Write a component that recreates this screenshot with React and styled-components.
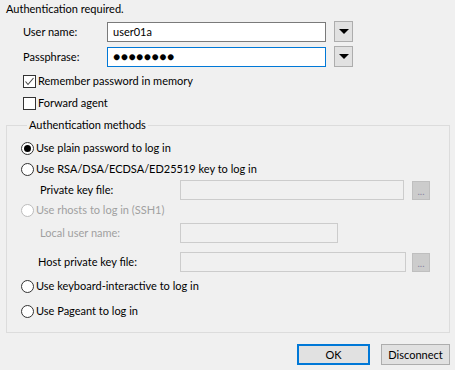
import React from "react";
import styled, { createGlobalStyle } from "styled-components";

const GlobalStyle = createGlobalStyle`
  html, body {
    margin: 0;
    padding: 0;
    background: #f0f0f0;
  }
`;

const Dialog = styled.div`
  width: 455px;
  height: 370px;
  box-sizing: border-box;
  padding: 1px 5px 0 6px;
  background: #f0f0f0;
  color: #000;
  font-family: Lato, Roboto, "Liberation Sans", Arial, sans-serif;
  font-size: 11px;
  line-height: 16px;
  display: flex;
  flex-direction: column;
`;

const Title = styled.div`
  height: 16px;
`;

const CredGrid = styled.div`
  display: grid;
  grid-template-columns: 76px 219px 19px;
  grid-auto-rows: 21px;
  column-gap: 8px;
  row-gap: 4px;
  align-items: center;
  margin: 4px 0 0 17px;
`;

const Label = styled.span`
  color: ${p => (p.$disabled ? "#a0a0a0" : "#000")};
  white-space: nowrap;
`;

const TextBox = styled.div`
  height: 20px;
  box-sizing: border-box;
  border: 1px solid ${p => (p.$focused ? "#0078d7" : p.$disabled ? "#cccccc" : "#7a7a7a")};
  background: ${p => (p.$disabled ? "#f0f0f0" : "#fff")};
  width: ${p => p.$width || 219}px;
  padding: 0 5px;
  display: flex;
  align-items: center;
  overflow: hidden;
  font-size: ${p => (p.$dots ? "12px" : "inherit")};
  letter-spacing: ${p => (p.$dots ? "0.5px" : "normal")};
`;

const DropButton = styled.div`
  width: 19px;
  height: 21px;
  box-sizing: border-box;
  border: 1px solid #adadad;
  background: #e1e1e1;
  display: flex;
  align-items: center;
  justify-content: center;
`;

const CheckRow = styled.label`
  display: flex;
  align-items: center;
  height: 20px;
  margin-left: 17px;
  margin-top: ${p => p.$top || 0}px;
`;

const Box = styled.span`
  width: 13px;
  height: 13px;
  box-sizing: border-box;
  border: 1px solid #333;
  background: #fff;
  margin-right: 2px;
  display: flex;
  align-items: center;
  justify-content: center;
`;

const Group = styled.fieldset`
  margin: 5px 0 0 0;
  padding: 0 0 10px 14px;
  border: 1px solid #dcdcdc;
  height: 215px;
  box-sizing: border-box;
  min-width: 0;
  display: flex;
  flex-direction: column;
`;

const Legend = styled.legend`
  padding: 0 2px;
  margin-left: 6px;
  line-height: 14px;
`;

const Row = styled.div`
  display: flex;
  align-items: center;
  height: 20px;
  margin-top: ${p => p.$top || 0}px;
`;

const SubRow = styled(Row)`
  padding-left: ${p => p.$indent || 19}px;
`;

const SubLabel = styled(Label)`
  width: ${p => 159 - (p.$indent || 19)}px;
`;

const Radio = styled.span`
  width: 13px;
  height: 13px;
  box-sizing: border-box;
  border-radius: 50%;
  border: 1px solid ${p => (p.$disabled ? "#bcbcbc" : "#333")};
  background: #fff;
  margin-right: 2px;
  display: flex;
  align-items: center;
  justify-content: center;

  &::after {
    content: "";
    display: ${p => (p.$checked ? "block" : "none")};
    width: 7px;
    height: 7px;
    border-radius: 50%;
    background: #000;
  }
`;

const Browse = styled.div`
  width: 18px;
  height: 19px;
  box-sizing: border-box;
  margin-left: ${p => p.$gap || 8}px;
  border: 1px solid #bfbfbf;
  background: #cccccc;
  color: #8a83a0;
  font-size: 10px;
  display: flex;
  align-items: center;
  justify-content: center;
  padding-top: 2px;
`;

const Footer = styled.div`
  display: flex;
  justify-content: flex-end;
  gap: 11px;
  margin-top: 11px;
`;

const Button = styled.div`
  width: ${p => p.$width}px;
  height: 21px;
  box-sizing: border-box;
  border: ${p => (p.$default ? "2px solid #0078d7" : "1px solid #adadad")};
  background: #e1e1e1;
  display: flex;
  align-items: center;
  justify-content: center;
`;

const Arrow = () => (
  <svg width="10" height="5" viewBox="0 0 10 5">
    <polygon points="0,0 10,0 5,5" fill="#000" />
  </svg>
);

const Check = () => (
  <svg width="11" height="11" viewBox="0 0 11 11">
    <polyline points="1.5,5.5 4,8.5 9.5,2" fill="none" stroke="#444" strokeWidth="1.1" />
  </svg>
);

export default function App() {
  return (
    <Dialog>
      <GlobalStyle />
      <Title>Authentication required.</Title>
      <CredGrid>
        <Label>User name:</Label>
        <TextBox>user01a</TextBox>
        <DropButton><Arrow /></DropButton>
        <Label>Passphrase:</Label>
        <TextBox $focused $dots>●●●●●●●●</TextBox>
        <DropButton><Arrow /></DropButton>
      </CredGrid>
      <CheckRow $top={4}>
        <Box><Check /></Box>
        Remember password in memory
      </CheckRow>
      <CheckRow $top={2}>
        <Box />
        Forward agent
      </CheckRow>

      <Group>
        <Legend>Authentication methods</Legend>
        <Row $top={6}>
          <Radio $checked />
          Use plain password to log in
        </Row>
        <Row $top={1}>
          <Radio />
          Use RSA/DSA/ECDSA/ED25519 key to log in
        </Row>
        <SubRow $top={1}>
          <SubLabel>Private key file:</SubLabel>
          <TextBox $disabled $width={224} />
          <Browse>...</Browse>
        </SubRow>
        <Row>
          <Radio $disabled />
          <Label $disabled>Use rhosts to log in (SSH1)</Label>
        </Row>
        <SubRow $top={3}>
          <SubLabel $disabled>Local user name:</SubLabel>
          <TextBox $disabled $width={158} />
        </SubRow>
        <SubRow $top={9} $indent={17}>
          <SubLabel $indent={17}>Host private key file:</SubLabel>
          <TextBox $disabled $width={226} />
          <Browse $gap={6}>...</Browse>
        </SubRow>
        <Row $top={4}>
          <Radio />
          Use keyboard-interactive to log in
        </Row>
        <Row $top={5}>
          <Radio />
          Use Pageant to log in
        </Row>
      </Group>

      <Footer>
        <Button $default $width={73}>OK</Button>
        <Button $width={69}>Disconnect</Button>
      </Footer>
    </Dialog>
  );
}
